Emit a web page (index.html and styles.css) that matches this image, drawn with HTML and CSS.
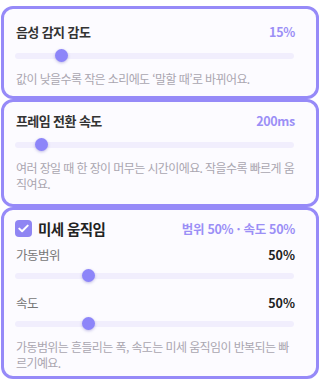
FILE: index.html
```html
<!DOCTYPE html>
<html lang="ko">
<head>
  <meta charset="UTF-8">
  <title>움직임 설정</title>
  <link rel="stylesheet" href="styles.css">
</head>
<body>
  <div class="settings">

    <div class="card">
      <div class="card-head">
        <span class="card-title">음성 감지 감도</span>
        <span class="card-value">15%</span>
      </div>
      <input class="slider" type="range" min="0" max="100" value="15">
      <p class="card-desc">값이 낮을수록 작은 소리에도 ‘말할 때’로 바뀌어요.</p>
    </div>

    <div class="card">
      <div class="card-head">
        <span class="card-title">프레임 전환 속도</span>
        <span class="card-value">200ms</span>
      </div>
      <input class="slider" type="range" min="50" max="2000" value="200">
      <p class="card-desc">여러 장일 때 한 장이 머무는 시간이에요. 작을수록 빠르게 움직여요.</p>
    </div>

    <div class="card">
      <div class="card-head">
        <label class="check-title">
          <span class="checkbox">
            <svg width="11" height="9" viewBox="0 0 11 9"><path d="M1.3 4.6 4.1 7.3 9.7 1.6" fill="none" stroke="#fff" stroke-width="2" stroke-linecap="round" stroke-linejoin="round"/></svg>
          </span>
          <span class="card-title big">미세 움직임</span>
        </label>
        <span class="card-value">범위 50% · 속도 50%</span>
      </div>

      <div class="field">
        <div class="field-head">
          <span class="field-label">가동범위</span>
          <span class="field-value">50%</span>
        </div>
        <input class="slider" type="range" min="0" max="200" value="50">
      </div>

      <div class="field">
        <div class="field-head">
          <span class="field-label">속도</span>
          <span class="field-value">50%</span>
        </div>
        <input class="slider" type="range" min="0" max="200" value="50">
      </div>

      <p class="card-desc">가동범위는 흔들리는 폭, 속도는 미세 움직임이 반복되는 빠르기예요.</p>
    </div>

  </div>
</body>
</html>
```

FILE: styles.css
```css
body {
  margin: 0;
  background: #ffffff;
  font-family: "Noto Sans CJK KR", sans-serif;
  color: #333333;
}

.settings {
  padding: 6px 2px 0 1px;
}

.card {
  background: #fcfbff;
  border: 3px solid #968af8;
  border-radius: 12px;
  padding: 8px 21px 12px 12px;
}

.card:first-child {
  padding-top: 12px;
  padding-bottom: 9px;
}

.card:last-child {
  padding-bottom: 5px;
}

.card-head {
  display: flex;
  justify-content: space-between;
  align-items: center;
  height: 20px;
}

.card-title {
  font-size: 13px;
  font-weight: 700;
  letter-spacing: -0.6px;
  color: #333333;
}

.card-title.big {
  font-size: 14.5px;
  color: #222222;
}

.card-value {
  font-size: 12.5px;
  font-weight: 700;
  letter-spacing: -0.3px;
  color: #9b8ff6;
}

.check-title {
  display: flex;
  align-items: center;
  gap: 6px;
}

.checkbox {
  width: 17px;
  height: 17px;
  margin-left: -1px;
  border-radius: 4px;
  background: #8f85f3;
  display: flex;
  align-items: center;
  justify-content: center;
}

.slider {
  -webkit-appearance: none;
  appearance: none;
  display: block;
  width: 100%;
  height: 13px;
  margin: 8px 0 0 -1px;
  background: transparent;
}

.slider::-webkit-slider-runnable-track {
  height: 6px;
  border-radius: 3px;
  background: #f1eefd;
}

.slider::-webkit-slider-thumb {
  -webkit-appearance: none;
  width: 13px;
  height: 13px;
  margin-top: -3.5px;
  border-radius: 50%;
  background: #8d85f9;
  box-shadow: 0 1px 3px rgba(80, 70, 180, 0.35);
}

.card-desc {
  margin: 9px -4px 0 0;
  font-size: 12px;
  line-height: 16px;
  letter-spacing: -0.6px;
  word-break: break-all;
  color: #aaa6b0;
}

.field {
  margin-top: 7px;
}

.field + .field {
  margin-top: 11px;
}

.field-head {
  display: flex;
  justify-content: space-between;
  align-items: center;
  height: 18px;
}

.field-label {
  font-size: 12.5px;
  letter-spacing: -0.5px;
  color: #777777;
}

.field-value {
  font-size: 12.5px;
  font-weight: 700;
  color: #222222;
}

.field .slider {
  margin-top: 6px;
}
```
